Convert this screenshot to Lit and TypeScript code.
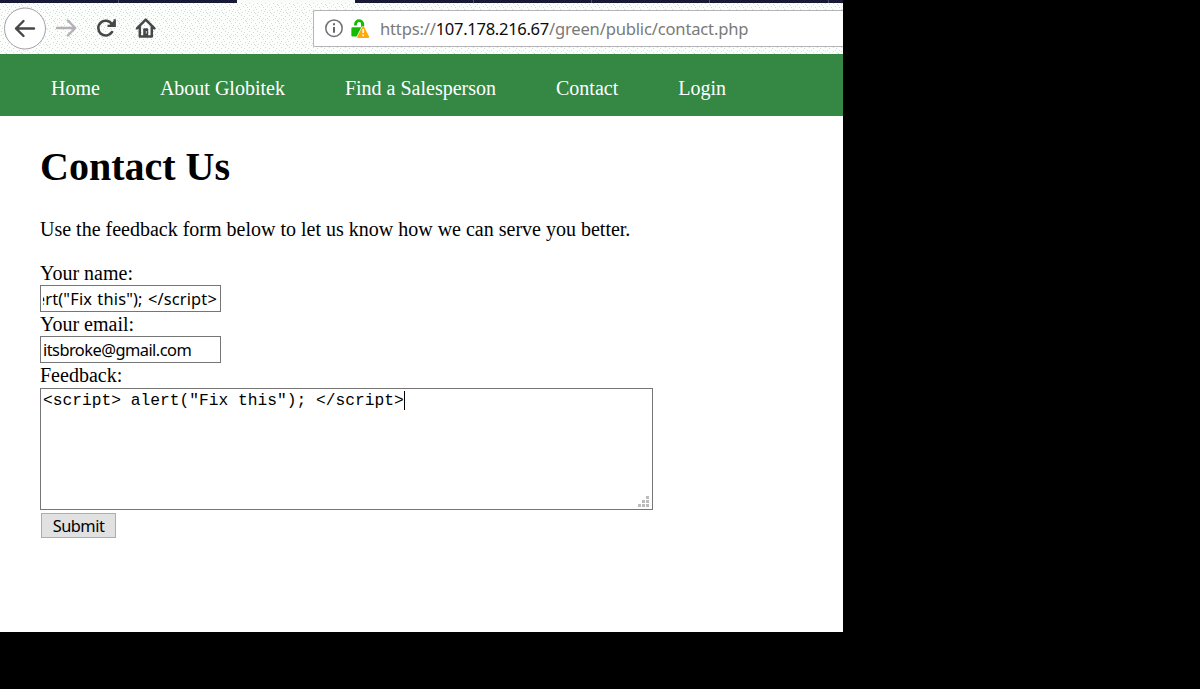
import { LitElement, html, css, svg } from "lit";
import { customElement } from "lit/decorators.js";

const specks = [[1,0],[5,1],[9,0],[13,1],[3,3],[7,4],[11,3],[15,4],[0,6],[5,7],[9,6],[13,7],[2,9],[7,10],[11,9],[15,10],[1,12],[4,13],[9,12],[13,13],[3,15],[7,15],[11,15],[6,2],[14,9],[8,8]];

@customElement("browser-bar")
class BrowserBar extends LitElement {
  static styles = css`
    :host { display: block; height: 54px; font-family: "Noto Sans", sans-serif; }
    .tabs { display: flex; height: 3px; background: #fafcfa; }
    .tab { background: #181936; border-right: 1px solid #4d4e68; box-sizing: border-box; width: 119px; }
    .tab.second { width: 118px; border: 0; }
    .tab.after { margin-left: 118px; }
    .tab.mid { width: 118px; }
    .tab.last { width: 14px; border: 0; }
    .bar { display: grid; height: 51px; }
    .texture, .controls { grid-area: 1 / 1; }
    .texture { width: 843px; height: 51px; display: block; }
    .controls { display: flex; z-index: 1; align-items: flex-start; }
    .buttons { width: 313px; height: 51px; flex: none; display: block; }
    .address { box-sizing: border-box; margin-top: 7px; width: 530px; height: 37px; border: 1px solid #b4b4b9; border-right: 0; border-radius: 2px 0 0 2px; background: #fff; display: flex; align-items: center; color: #7a7a7a; font-size: 16.6px; white-space: pre; }
    .status { width: 66px; height: 35px; flex: none; }
    .url { letter-spacing: -.19px; }
    .host { color: #0c0c0d; letter-spacing: -.32px; }
  `;
  render() {
    return html`
      <div class="tabs"><i class="tab"></i><i class="tab second"></i><i class="tab after"></i><i class="tab"></i><i class="tab mid"></i><i class="tab"></i><i class="tab last"></i></div>
      <div class="bar">
        <svg class="texture" shape-rendering="crispEdges">
          <defs><pattern id="grain" width="16" height="16" patternUnits="userSpaceOnUse">
            <rect width="16" height="16" fill="#fcfefc"/>
            ${specks.map(([x, y]) => svg`<rect x=${x} y=${y} width="1" height="1" fill="#d4dcd7"/>`)}
          </pattern></defs>
          <rect width="843" height="51" fill="url(#grain)"/>
        </svg>
        <div class="controls">
          <svg class="buttons" viewBox="0 3 313 51" fill="none" stroke-linecap="round" stroke-linejoin="round">
            <circle cx="25" cy="28.5" r="20.5" fill="#fff" stroke="#a5a0ac"/>
            <path d="M16 28.5H34M23.5 21L16 28.5L23.5 36" stroke="#47474a" stroke-width="2.4"/>
            <path d="M57 28H75M67.8 20.5L75.3 28L67.8 35.5" stroke="#b4b0b6" stroke-width="2.4"/>
            <path d="M112 32A7.4 7.4 0 1 1 112 24.2" stroke="#47474a" stroke-width="2.6"/>
            <path d="M107.5 25.8H114.8V19.2" stroke="#47474a" stroke-width="2.2" stroke-linecap="butt" stroke-linejoin="miter"/>
            <path d="M114.5 20V25.5H109Z" fill="#47474a"/>
            <path d="M137 28.3L145.7 19.6L154.4 28.3M139.8 27V36.5H151.8V27" stroke="#47474a" stroke-width="2.5"/>
            <path d="M143.2 36V29.2Q143.2 28.2 144.2 28.2H147.2Q148.2 28.2 148.2 29.2V36Z" fill="#47474a"/>
            <path d="M146.3 31V33.5" stroke="#ddd" stroke-width="1" stroke-linecap="butt"/>
          </svg>
          <div class="address">
            <svg class="status" viewBox="314 11 66 35" fill="none">
              <circle cx="334" cy="28.2" r="8.2" stroke="#717174" stroke-width="1.5"/>
              <path d="M334 27V32.8M334 23.2V25.3" stroke="#66666a" stroke-width="2"/>
              <path d="M355.5 25.5V24.2A3.6 3.6 0 0 1 362.7 24.2V28" stroke="#12bc00" stroke-width="2.8"/>
              <path d="M352.6 27.3H361.5L357 36.5H352.6Q351.4 36.5 351.4 35.3V28.5Q351.4 27.3 352.6 27.3Z" fill="#12bc00"/>
              <path d="M363.2 27.2L368.3 37H358.1Z" fill="#ffa90c" stroke="#fff" stroke-width="3" stroke-linejoin="round"/>
              <path d="M363.2 27.2L368.3 37H358.1Z" fill="#ffa90c" stroke="#ffa90c" stroke-width="1.8" stroke-linejoin="round"/>
              <path d="M363.2 28.9V33M363.2 34.4V36.2" stroke="#fff" stroke-width="1.6"/>
              <path d="M362.7 23V26.3" stroke="#12bc00" stroke-width="2.8"/>
            </svg>
            <span class="url">https://<span class="host">107.178.216.67</span>/green/public/contact.php</span>
          </div>
        </div>
      </div>`;
  }
}

@customElement("app-root")
class AppRoot extends LitElement {
  static styles = css`
    :host { display: block; width: 1200px; height: 689px; overflow: hidden; background: #000; color: #000; font: 20px/23px "Liberation Serif", "Times New Roman", serif; }
    .window { width: 843px; height: 632px; overflow: hidden; background: #fff; }
    .nav { display: flex; gap: 60px; height: 62px; box-sizing: border-box; padding: 23px 0 0 51px; background: #348844; color: #fff; white-space: nowrap; }
    main { padding: 28px 40px 0; }
    h1 { margin: 0; font-size: 40px; line-height: 46px; }
    p { margin: 28px 0 21px; }
    form { display: flex; flex-direction: column; align-items: flex-start; }
    label { height: 24px; white-space: nowrap; }
    label:first-child { height: 23px; }
    label:not(:first-child) { box-sizing: border-box; padding-top: 1px; }
    .field { box-sizing: border-box; width: 181px; height: 27px; border: 1px solid #767676; padding: 0 2px; background: #fff; font: 16.4px/26px "Noto Sans", sans-serif; letter-spacing: -.53px; overflow: hidden; display: flex; white-space: pre; }
    .field.end { padding-right: 3px; letter-spacing: .17px; word-spacing: .8px; }
    .clip { display: flex; justify-content: flex-end; width: 100%; overflow: hidden; }
    .area { box-sizing: border-box; width: 613px; height: 122px; margin-top: 1px; border: 1px solid #767676; padding: 2px 3px 2px 2px; display: grid; grid-template: 1fr auto / 1fr; font: 16.26px/19px "Liberation Mono", "Courier New", monospace; white-space: pre; }
    .entry { display: flex; height: 20px; }
    .caret { width: 1px; height: 19px; background: #000; }
    .grip { justify-self: end; width: 11px; height: 11px; display: block; }
    button { box-sizing: border-box; width: 75px; height: 25px; margin: 3px 0 0 1px; padding: 0; border: 1px solid #adadad; background: #e1e1e1; color: #000; font: 16.4px/23px "Noto Sans", sans-serif; letter-spacing: -.5px; }
  `;
  render() {
    return html`
      <div class="window">
        <browser-bar></browser-bar>
        <nav class="nav"><span>Home</span><span>About Globitek</span><span>Find a Salesperson</span><span>Contact</span><span>Login</span></nav>
        <main>
          <h1>Contact Us</h1>
          <p>Use the feedback form below to let us know how we can serve you better.</p>
          <form>
            <label>Your name:</label>
            <div class="field end"><div class="clip"><span>${'ert("Fix this"); </script>'}</span></div></div>
            <label>Your email:</label>
            <div class="field"><span>itsbroke@gmail.com</span></div>
            <label>Feedback:</label>
            <div class="area"><div class="entry"><span>${'<script> alert("Fix this"); </script>'}</span><i class="caret"></i></div><svg class="grip" viewBox="0 0 11 11" fill="#bcbcbc" shape-rendering="crispEdges"><path d="M8 0h3v3h-3zM4 4h3v3h-3zM8 4h3v3h-3zM0 8h3v3h-3zM4 8h3v3h-3zM8 8h3v3h-3z"/></svg></div>
            <button type="button">Submit</button>
          </form>
        </main>
      </div>`;
  }
}
